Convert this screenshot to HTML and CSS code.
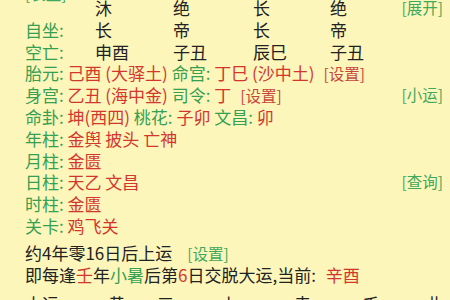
FILE: index.html
```html
<!DOCTYPE html>
<html lang="zh">
<head>
<meta charset="utf-8">
<link rel="stylesheet" href="styles.css">
</head>
<body>
<div class="page">
  <div class="grid-row">
    <span class="link top-tag">[长生]</span>
    <span>沐</span><span>绝</span><span>长</span><span>绝</span>
    <span class="link">[展开]</span>
  </div>
  <div class="grid-row">
    <span class="lbl">自坐:</span>
    <span>长</span><span>帝</span><span>长</span><span>帝</span>
    <span></span>
  </div>
  <div class="grid-row">
    <span class="lbl">空亡:</span>
    <span>申酉</span><span>子丑</span><span>辰巳</span><span>子丑</span>
    <span></span>
  </div>
  <div class="line">
    <span class="lbl">胎元:</span> <span class="red">己酉 (大驿土)</span> <span class="lbl">命宫:</span> <span class="red">丁巳 (沙中土)</span><span class="red-link">[设置]</span>
  </div>
  <div class="line split">
    <span><span class="lbl">身宫:</span> <span class="red">乙丑 (海中金)</span> <span class="lbl">司令:</span> <span class="red">丁</span><span class="red-link">[设置]</span></span>
    <span class="link">[小运]</span>
  </div>
  <div class="line">
    <span class="lbl">命卦:</span> <span class="red">坤(西四)</span> <span class="lbl">桃花:</span> <span class="red">子卯</span> <span class="lbl">文昌:</span> <span class="red">卯</span>
  </div>
  <div class="line"><span class="lbl">年柱:</span> <span class="red">金舆 披头 亡神</span></div>
  <div class="line"><span class="lbl">月柱:</span> <span class="red">金匮</span></div>
  <div class="line split">
    <span><span class="lbl">日柱:</span> <span class="red">天乙 文昌</span></span>
    <span class="link">[查询]</span>
  </div>
  <div class="line"><span class="lbl">时柱:</span> <span class="red">金匮</span></div>
  <div class="line"><span class="lbl">关卡:</span> <span class="red">鸡飞关</span></div>
  <div class="line plain gap">约4年零16日后上运<span class="link set">[设置]</span></div>
  <div class="line plain">即每逢<span class="red">壬</span>年<span class="green">小暑</span>后第<span class="red">6</span>日交脱大运,当前: <span class="red big">辛酉</span></div>
  <div class="line plain cols">
    <span class="c1">大运</span><span class="c2">黄</span><span class="c3">三</span><span class="c4">上</span><span class="c5">寺</span><span class="c6">壬</span><span>此</span>
  </div>
</div>
</body>
</html>
```
FILE: styles.css
```css
html, body {
  margin: 0;
  padding: 0;
}
body {
  width: 450px;
  height: 300px;
  overflow: hidden;
  background: #fcf6bb;
  font-family: "Noto Sans CJK SC", "Noto Sans", sans-serif;
  font-size: 17px;
  color: #222;
}
.page {
  margin-top: -3px;
  padding: 0 7px 0 25px;
}
.grid-row {
  display: grid;
  grid-template-columns: 70px 78px 80px 77px 1fr auto;
  line-height: 21.8px;
  height: 21.8px;
  white-space: nowrap;
}
.top-tag {
  margin-top: -14px;
}
.line {
  line-height: 21.8px;
  height: 21.8px;
  white-space: nowrap;
}
.split {
  display: flex;
  justify-content: space-between;
}
.gap {
  margin-top: 5px;
}
.lbl {
  color: #35a052;
}
.green {
  color: #35a052;
}
.red {
  color: #d3362d;
}
.big {
  margin-left: 6px;
}
.link {
  color: #3fa85b;
  font-size: 15.5px;
}
.red-link {
  color: #c8453a;
  font-size: 15.5px;
  margin-left: 9px;
}
.set {
  margin-left: 15px;
}
.cols {
  display: flex;
  margin-top: 8px;
}
.cols .c1 { width: 85px; }
.cols .c2 { width: 50px; }
.cols .c3 { width: 65px; }
.cols .c4 { width: 75px; }
.cols .c5 { width: 70px; }
.cols .c6 { width: 65px; }
```
